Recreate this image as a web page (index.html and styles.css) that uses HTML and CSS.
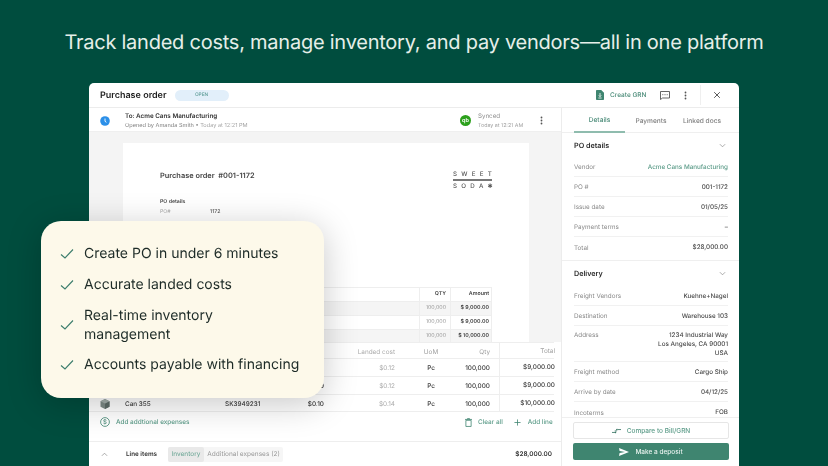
FILE: index.html
```html
<!DOCTYPE html>
<html lang="en">
<head>
<meta charset="utf-8">
<title>Purchase order</title>
<link rel="stylesheet" href="styles.css">
</head>
<body>
<main class="stage">
  <h1 class="headline">Track landed costs, manage inventory, and pay vendors—all in one platform</h1>

  <section class="app">
    <header class="topbar">
      <span class="po-title">Purchase order</span>
      <span class="pill">OPEN</span>
      <div class="top-actions">
        <svg class="i-grn" viewBox="0 0 8 10"><path d="M.8 0h4.400L8 2.800v6.400a.8.800 0 0 1-.8.8H.8a.8.800 0 0 1-.8-.8V.8A.8.800 0 0 1 .8 0z" fill="#3f8570"/><path d="M2.400 8h3.200M4 3v3.600M2.800 5.400L4 6.600 5.200 5.400" stroke="#fff" stroke-width=".8" fill="none"/></svg>
        <span class="grn-label">Create GRN</span>
        <svg class="i-chat" viewBox="0 0 10 9"><path d="M.5.500h9v6.500H2.500L.5 8.500z" fill="none" stroke="#555" stroke-width=".9"/><path d="M2.300 3.700h1M4.500 3.700h1M6.700 3.700h1" stroke="#555" stroke-width=".9"/></svg>
        <svg class="i-kebab" viewBox="0 0 4 12"><circle cx="2" cy="2" r="1.200" fill="#555"/><circle cx="2" cy="6" r="1.200" fill="#555"/><circle cx="2" cy="10" r="1.200" fill="#555"/></svg>
        <span class="top-sep"></span>
        <svg class="i-close" viewBox="0 0 10 10"><path d="M1.500 1.500l7 7M8.500 1.500l-7 7" stroke="#444" stroke-width="1.100"/></svg>
      </div>
    </header>

    <div class="workspace">
      <div class="main-col">
        <div class="subbar">
          <svg class="i-clock" viewBox="0 0 10 10"><circle cx="5" cy="5" r="4.800" fill="#2b8fe8"/><path d="M5 2.500V5.300L6.400 6.300" stroke="#fff" stroke-width=".9" fill="none"/></svg>
          <div class="sub-text">
            <div class="sub-to">To: Acme Cans Manufacturing</div>
            <div class="sub-meta">Opened by Amanda Smith • <span class="muted">Today at 12:21 PM</span></div>
          </div>
          <span class="qb">qb</span>
          <div class="sync">
            <div class="sync-title">Synced</div>
            <div class="sync-time">Today at 12:21 AM</div>
          </div>
          <svg class="i-kebab" viewBox="0 0 4 12"><circle cx="2" cy="2" r="1.200" fill="#555"/><circle cx="2" cy="6" r="1.200" fill="#555"/><circle cx="2" cy="10" r="1.200" fill="#555"/></svg>
        </div>

        <div class="doc-area">
          <article class="doc">
            <div class="doc-head">
              <div class="doc-title">Purchase order&nbsp; #001-1172</div>
              <div class="logo">
                <div class="logo-line">SWEET</div>
                <div class="logo-rule"></div>
                <div class="logo-line">SODA✱</div>
              </div>
            </div>
            <div class="doc-label">PO details</div>
            <dl class="doc-meta">
              <dt>PO#</dt><dd>1172</dd>
              <dt>Issue date</dt><dd>11/08/2024</dd>
            </dl>
            <div class="doc-table">
              <div class="dt-row"><span></span><span class="dt-qty dt-strong">QTY</span><span class="dt-amt">Amount</span></div>
              <div class="dt-row dt-alt"><span></span><span class="dt-qty">100,000</span><span class="dt-amt">$ 9,000.00</span></div>
              <div class="dt-row"><span></span><span class="dt-qty">100,000</span><span class="dt-amt">$ 9,000.00</span></div>
              <div class="dt-row dt-alt"><span></span><span class="dt-qty">100,000</span><span class="dt-amt">$ 10,000.00</span></div>
            </div>
          </article>
        </div>

        <div class="lines">
          <div class="l-row l-head">
            <span></span><span></span><span></span><span></span>
            <span class="l-cost">Landed cost</span><span class="l-uom">UoM</span><span class="l-qty">Qty</span><span class="l-total">Total</span>
          </div>
          <div class="l-row">
            <span></span><span></span><span></span><span></span>
            <span class="l-cost">$0.12</span><span class="l-uom">Pc</span><span class="l-qty">100,000</span><span class="l-total">$9,000.00</span>
          </div>
          <div class="l-row">
            <span></span><span></span><span></span><span class="l-unit">$0.09</span>
            <span class="l-cost">$0.12</span><span class="l-uom">Pc</span><span class="l-qty">100,000</span><span class="l-total">$9,000.00</span>
          </div>
          <div class="l-row l-end">
            <svg class="i-can" viewBox="0 0 10 10"><path d="M5 0l4.500 2.200v5.600L5 10 .5 7.800V2.200z" fill="#7d8a86"/><path d="M5 4.500l4.500-2.300v5.600L5 10z" fill="#5d6b67"/><path d="M5 0l4.500 2.200L5 4.500.5 2.200z" fill="#a3aeaa"/></svg>
            <span>Can 355</span><span>SK3949231</span><span class="l-unit">$0.10</span>
            <span class="l-cost">$0.14</span><span class="l-uom">Pc</span><span class="l-qty">100,000</span><span class="l-total">$10,000.00</span>
          </div>
          <div class="l-actions">
            <svg class="i-dollar" viewBox="0 0 10 10"><circle cx="5" cy="5" r="4.400" fill="none" stroke="#3f8570" stroke-width=".8"/><text x="5" y="7.200" text-anchor="middle" class="dollar-glyph">$</text></svg>
            <span class="link add-exp">Add addtional expenses</span>
            <svg class="i-trash" viewBox="0 0 8 10"><path d="M1 2.500h6V9.500H1zM0 1.500h8M2.800 1.500V.5h2.400v1" fill="none" stroke="#3f8570" stroke-width=".9"/></svg>
            <span class="link">Clear all</span>
            <svg class="i-plus" viewBox="0 0 8 8"><path d="M4 .5v7M.5 4h7" stroke="#3f8570" stroke-width=".9"/></svg>
            <span class="link">Add line</span>
          </div>
        </div>

        <footer class="l-footer">
          <svg class="i-chev" viewBox="0 0 8 5"><path d="M1 4l3-3 3 3" fill="none" stroke="#888" stroke-width=".8"/></svg>
          <span class="lf-title">Line items</span>
          <div class="lf-tabs">
            <span class="lf-tab lf-active">Inventory</span>
            <span class="lf-tab">Additional expenses (2)</span>
          </div>
          <span class="lf-sum">$28,000.00</span>
        </footer>
      </div>

      <aside class="side">
        <nav class="side-tabs">
          <span class="s-tab s-active">Details</span>
          <span class="s-tab">Payments</span>
          <span class="s-tab">Linked docs</span>
        </nav>
        <div class="side-scroll">
          <section class="s-sec s-sec-first">
            <div class="s-head"><span>PO details</span><svg class="i-chev" viewBox="0 0 8 5"><path d="M1 1l3 3 3-3" fill="none" stroke="#888" stroke-width=".8"/></svg></div>
            <div class="s-row"><span class="s-k">Vendor</span><span class="s-v s-link">Acme Cans Manufacturing</span></div>
            <div class="s-row"><span class="s-k">PO #</span><span class="s-v">001-1172</span></div>
            <div class="s-row"><span class="s-k">Issue date</span><span class="s-v">01/05/25</span></div>
            <div class="s-row"><span class="s-k">Payment terms</span><span class="s-v">–</span></div>
            <div class="s-row s-last"><span class="s-k">Total</span><span class="s-v">$28,000.00</span></div>
          </section>
          <section class="s-sec s-sec-second">
            <div class="s-head"><span>Delivery</span><svg class="i-chev" viewBox="0 0 8 5"><path d="M1 1l3 3 3-3" fill="none" stroke="#888" stroke-width=".8"/></svg></div>
            <div class="s-row"><span class="s-k">Freight Vendors</span><span class="s-v">Kuehne+Nagel</span></div>
            <div class="s-row"><span class="s-k">Destination</span><span class="s-v">Warehouse 103</span></div>
            <div class="s-row s-tall"><span class="s-k">Address</span><span class="s-v">1234 Industrial Way<br>Los Angeles, CA 90001<br>USA</span></div>
            <div class="s-row"><span class="s-k">Freight method</span><span class="s-v">Cargo Ship</span></div>
            <div class="s-row"><span class="s-k">Arrive by date</span><span class="s-v">04/12/25</span></div>
            <div class="s-row s-last"><span class="s-k">Incoterms</span><span class="s-v">FOB</span></div>
          </section>
        </div>
        <div class="side-foot">
          <button class="btn btn-ghost" type="button">
            <svg class="i-compare" viewBox="0 0 10 6"><path d="M0 4.600h3.400M5.800 1.400H10M3 2.900L5.500 2.900" fill="none" stroke="#2f6f5d" stroke-width=".9"/><path d="M3.400 3.300L5 4.600 3.400 5.900zM5.800 .1V2.700L4.400 1.400z" fill="#2f6f5d"/></svg>
            Compare to Bill/GRN
          </button>
          <button class="btn btn-solid" type="button">
            <svg class="i-send" viewBox="0 0 10 8"><path d="M0 0l10 4-10 4 .6-3L6 4 .6 3z" fill="#fff"/></svg>
            Make a deposit
          </button>
        </div>
      </aside>
    </div>
  </section>

  <aside class="benefits">
    <ul class="b-list">
      <li class="b-item"><svg class="i-check" viewBox="0 0 14 10"><path d="M1 5.500l4 3.500 8-8.500" fill="none" stroke="#3b7d6c" stroke-width="1.100"/></svg><span>Create PO in under 6 minutes</span></li>
      <li class="b-item"><svg class="i-check" viewBox="0 0 14 10"><path d="M1 5.500l4 3.500 8-8.500" fill="none" stroke="#3b7d6c" stroke-width="1.100"/></svg><span>Accurate landed costs</span></li>
      <li class="b-item"><svg class="i-check" viewBox="0 0 14 10"><path d="M1 5.500l4 3.500 8-8.500" fill="none" stroke="#3b7d6c" stroke-width="1.100"/></svg><span>Real-time inventory<br>management</span></li>
      <li class="b-item"><svg class="i-check" viewBox="0 0 14 10"><path d="M1 5.500l4 3.500 8-8.500" fill="none" stroke="#3b7d6c" stroke-width="1.100"/></svg><span>Accounts payable with financing</span></li>
    </ul>
  </aside>
</main>
</body>
</html>
```

FILE: styles.css
```css
* { box-sizing: border-box; margin: 0; padding: 0; }
html, body { width: 828px; height: 466px; overflow: hidden; }
body { background: #004d3e; font-family: Inter, "Liberation Sans", sans-serif; color: #333; text-rendering: geometricPrecision; }
.stage { position: relative; width: 828px; height: 466px; overflow: hidden; }

.headline { height: 83px; display: flex; align-items: center; justify-content: center; font-size: 20px; font-weight: 400; letter-spacing: -.24px; color: #e6efe9; white-space: nowrap; }

.app { width: 650px; height: 383px; margin-left: 89px; background: #fff; border-radius: 5px 5px 0 0; display: flex; flex-direction: column; overflow: hidden; filter: blur(.3px); will-change: transform; }

.topbar { height: 25px; flex: none; display: flex; align-items: center; padding-left: 11px; border-bottom: 1px solid #ececec; }
.po-title { font-size: 9px; font-weight: 600; color: #222; }
.pill { width: 54px; height: 11px; margin-left: 8px; border-radius: 6px; background: #e2effa; color: #5d9c97; font-size: 4.800px; font-weight: 500; display: flex; align-items: center; justify-content: center; }
.top-actions { margin-left: auto; display: flex; align-items: center; height: 100%; }
.i-grn { width: 8px; height: 10px; margin-right: 6px; }
.grn-label { font-size: 6.500px; font-weight: 500; color: #4a8b78; width: 36px; white-space: nowrap; margin-right: 14px; }
.i-chat { width: 10px; height: 9px; margin-right: 14px; }
.i-kebab { width: 3px; height: 9px; }
.top-sep { width: 1px; height: 20px; background: #efefef; margin: 0 0 0 13px; }
.i-close { width: 8px; height: 8px; margin: 0 18px 0 12px; }

.workspace { flex: 1; display: flex; min-height: 0; }
.main-col { width: 473px; flex: none; border-right: 1px solid #ececec; display: flex; flex-direction: column; }

.subbar { height: 24px; flex: none; display: flex; align-items: center; padding: 2px 18px 0 11px; border-bottom: 1px solid #efefef; }
.i-clock { width: 10px; height: 10px; margin-right: 15px; }
.sub-text { flex: 1; }
.sub-to { font-size: 6.300px; font-weight: 600; color: #333; line-height: 9px; }
.sub-meta { font-size: 5.600px; color: #808080; line-height: 8px; margin-top: 1px; }
.muted { color: #a5a5a5; }
.qb { width: 11px; height: 11px; border-radius: 50%; background: #2ca01c; color: #fff; font-size: 5.500px; font-weight: 600; display: flex; align-items: center; justify-content: center; margin-right: 7px; }
.sync { width: 62px; }
.sync-title { font-size: 6.200px; color: #8a8a8a; line-height: 9px; }
.sync-time { font-size: 5.300px; color: #a0a0a0; line-height: 8px; margin-top: 1px; }

.doc-area { height: 210px; flex: none; background: #f4f4f4; padding: 11px 32px 0 34px; overflow: hidden; }
.doc { background: #fff; height: 250px; padding: 26px 37px 0; }
.doc-head { display: flex; justify-content: space-between; height: 27px; }
.doc-title { font-size: 7.400px; font-weight: 600; color: #444; margin-top: 2px; }
.logo { width: 39px; margin-top: 2px; }
.logo-line { font-size: 6.200px; line-height: 8px; color: #555; letter-spacing: 4.300px; white-space: nowrap; font-weight: 500; }
.logo-rule { height: 2px; background: #777; margin: 0 0 2px; }
.doc-label { font-size: 5.200px; font-weight: 600; color: #444; margin-top: 3px; }
.doc-meta { display: grid; grid-template-columns: 50px 1fr; font-size: 5.200px; line-height: 8.500px; margin-top: 3px; height: 79px; }
.doc-meta dt { color: #aaa; }
.doc-meta dd { color: #555; font-weight: 500; }
.doc-table { width: 332px; border: 1px solid #eee; border-bottom: 0; }
.dt-row { display: grid; grid-template-columns: 258px 31px 43px; height: 14px; align-items: center; font-size: 5.300px; border-bottom: 1px solid #eee; }
.dt-alt { background: #f5f5f5; }
.dt-qty { height: 100%; line-height: 13px; text-align: right; padding-right: 4px; color: #999; border-left: 1px solid #eee; }
.dt-strong { color: #444; font-weight: 600; }
.dt-amt { height: 100%; line-height: 13px; text-align: right; padding-right: 4px; font-weight: 600; color: #444; border-left: 1px solid #eee; }

.lines { flex: none; padding-right: 7px; background: #fff; }
.l-row { display: grid; grid-template-columns: 36px 100px 62px 37px 71px 64px 31px 65px; height: 18px; align-items: center; font-size: 6.400px; font-weight: 500; color: #3a3a3a; border-bottom: 1px solid #eee; }
.l-head { height: 17px; color: #a0a0a0; border-top: 1px solid #eee; font-weight: 400; }
.l-end { height: 17px; }
.i-can { width: 10px; height: 10px; margin-left: 11px; }
.l-unit { text-align: right; color: #333; }
.l-cost { text-align: right; color: #aaa; font-weight: 400; }
.l-uom { text-align: center; padding-left: 8px; }
.l-qty { text-align: right; white-space: nowrap; }
.l-total { height: 100%; line-height: 17px; text-align: right; border-left: 1px solid #eee; margin-left: 9px; white-space: nowrap; }
.l-actions { height: 29px; display: flex; align-items: center; padding: 0 0 9px 11px; font-size: 6.400px; }
.i-dollar { width: 10px; height: 10px; margin-right: 6px; }
.dollar-glyph { font-size: 6px; fill: #3f8570; font-family: Inter, sans-serif; }
.link { color: #5b9b88; font-weight: 500; white-space: nowrap; }
.add-exp { width: 349px; }
.i-trash { width: 7px; height: 9px; margin-right: 6px; }
.i-plus { width: 7px; height: 7px; margin: 0 7px 0 11px; }

.l-footer { flex: 1; border-top: 1px solid #eee; display: flex; align-items: center; padding: 0 9px 0 12px; font-size: 6.300px; }
.i-chev { width: 7px; height: 5px; }
.lf-title { margin-left: 18px; font-weight: 600; color: #333; }
.lf-tabs { display: flex; margin-left: 11px; background: #f6f6f6; border-radius: 2px; height: 15px; font-size: 6.500px; }
.lf-tab { padding: 0 3.500px; display: flex; align-items: center; color: #999; }
.lf-active { background: #e9e9e9; color: #6aa594; border-radius: 2px; }
.lf-sum { margin-left: auto; font-size: 6.400px; font-weight: 600; color: #333; }

.side { flex: 1; min-width: 0; display: flex; flex-direction: column; }
.side-tabs { height: 25px; flex: none; display: grid; grid-template-columns: 51px 52px 50px; padding-left: 12px; border-bottom: 1px solid #efefef; font-size: 6.600px; font-weight: 500; color: #808080; }
.s-tab { display: flex; align-items: center; justify-content: center; white-space: nowrap; height: 25px; }
.s-active { color: #4a8b78; font-weight: 500; border-bottom: 2px solid #8fbcae; }
.side-scroll { flex: 1; min-height: 0; overflow: hidden; }
.s-sec { padding: 0 11px 0 12px; border-bottom: 1px solid #efefef; }
.s-sec-first { height: 128px; }
.s-head { height: 24px; display: flex; align-items: center; justify-content: space-between; font-size: 7.200px; font-weight: 600; color: #2b2b2b; padding-right: 2px; }
.s-sec-second .s-head { height: 25px; }
.s-row { height: 20px; padding-top: 1px; display: flex; align-items: center; justify-content: space-between; font-size: 6.300px; border-bottom: 1px solid #f1f1f1; }
.s-last { border-bottom: 0; }
.s-k { color: #8a8a8a; }
.s-v { color: #4a4a4a; font-weight: 500; text-align: right; line-height: 8.800px; }
.s-link { color: #5b9b88; }
.s-tall { height: 36px; align-items: flex-start; padding-top: 5px; }
.side-foot { height: 49px; flex: none; border-top: 1px solid #efefef; padding: 4px 10px 0 11px; display: flex; flex-direction: column; gap: 4px; }
.btn { height: 17px; border-radius: 2px; font-family: inherit; font-size: 6.500px; display: flex; align-items: center; justify-content: center; gap: 6px; }
.btn-ghost { background: #fff; border: 1px solid #e6e6e6; color: #5b9b88; font-weight: 500; }
.btn-solid { background: #3f8570; border: 0; color: #e9f3ef; font-weight: 500; }
.i-compare { width: 9px; height: 6px; }
.i-send { width: 10px; height: 8px; }

.benefits { position: absolute; left: 41px; top: 221px; width: 283px; height: 177px; padding: 23px 20px 0 19px; background: #fdf9ea; border-radius: 20px; box-shadow: 0 6px 34px rgba(0,0,0,.22); }
.b-list { list-style: none; display: flex; flex-direction: column; gap: 12px; }
.b-item { display: flex; align-items: center; font-size: 14px; line-height: 19px; color: #1d2b27; }
.b-item:last-child { margin-top: -1px; }
.i-check { width: 14px; height: 10px; margin-right: 10px; flex: none; }
```
